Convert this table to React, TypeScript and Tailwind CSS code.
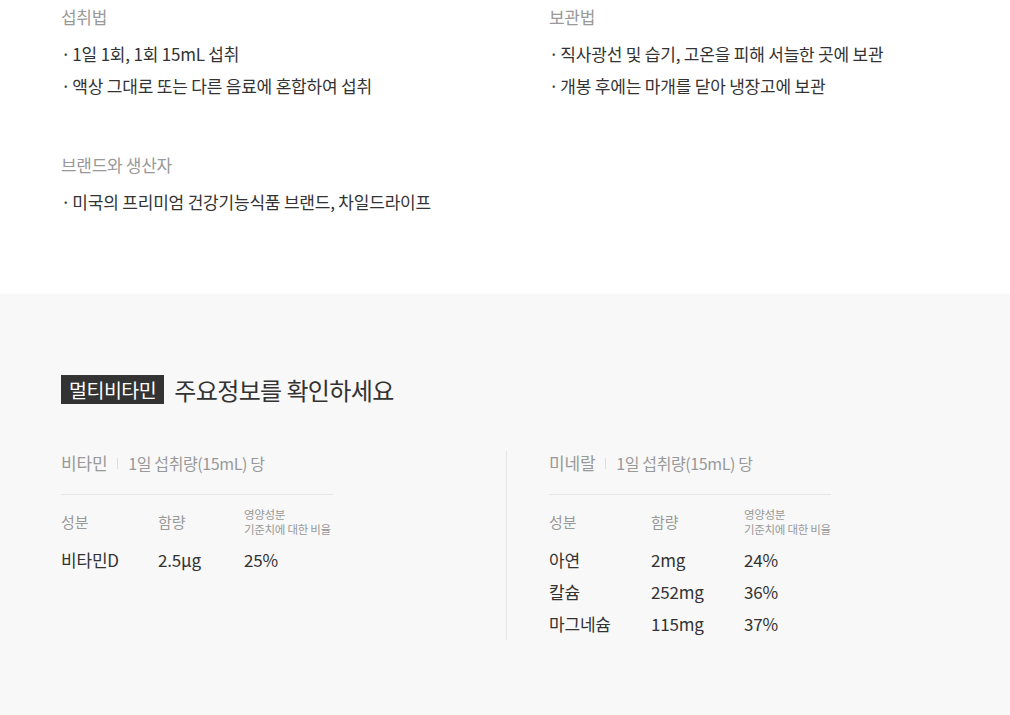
const FONT = "font-['Noto_Sans_CJK_KR','Noto_Sans',sans-serif]";

function Bullet({ children }: { children: string }) {
  return (
    <>
      <span className="mr-[2px]">·</span>
      {children}
    </>
  );
}

function InfoBlock({ title, items }: { title: string; items: string[] }) {
  return (
    <div>
      <h3 className="text-[17px] leading-[24px] text-[#999] tracking-[-0.3px]">{title}</h3>
      <ul className="mt-[9px]">
        {items.map((t) => (
          <li key={t} className="text-[17px] leading-[32px] text-[#333] tracking-[-0.2px]">
            <Bullet>{t}</Bullet>
          </li>
        ))}
      </ul>
    </div>
  );
}

type Row = [string, string, string];

function NutrientTable({ title, cols, rows, lineW }: { title: string; cols: number[]; rows: Row[]; lineW: number }) {
  return (
    <div>
      <div className="flex items-center pb-[19px] border-b border-[#e6e6e6]" style={{ width: lineW }}>
        <span className="text-[17px] leading-[24px] text-[#999] tracking-[-0.2px]">{title}</span>
        <span className="mx-[10px] h-[11px] w-px bg-[#ddd]" />
        <span className="text-[16px] leading-[24px] text-[#999] tracking-[-0.4px]">1일 섭취량(15mL) 당</span>
      </div>
      <div className="mt-[12px] flex items-center h-[30px] text-[#999]">
        <div className="text-[15px]" style={{ width: cols[0] }}>성분</div>
        <div className="text-[15px]" style={{ width: cols[1] }}>함량</div>
        <div className="text-[11.5px] leading-[15px] tracking-[-0.3px]">
          영양성분
          <br />
          기준치에 대한 비율
        </div>
      </div>
      <div className="mt-[7px]">
        {rows.map((r) => (
          <div key={r[0]} className="flex h-[32px] items-center text-[17px] text-[#333] tracking-[-0.2px]">
            <div style={{ width: cols[0] }}>{r[0]}</div>
            <div style={{ width: cols[1] }}>{r[1]}</div>
            <div>{r[2]}</div>
          </div>
        ))}
      </div>
    </div>
  );
}

export default function App() {
  return (
    <div className={`${FONT} min-h-screen bg-white`}>
      {/* 상단 정보 */}
      <div className="px-[61px] pt-[5px] pb-[76px]">
        <div className="grid grid-cols-[488px_1fr]">
          <InfoBlock title="섭취법" items={['1일 1회, 1회 15mL 섭취', '액상 그대로 또는 다른 음료에 혼합하여 섭취']} />
          <InfoBlock title="보관법" items={['직사광선 및 습기, 고온을 피해 서늘한 곳에 보관', '개봉 후에는 마개를 닫아 냉장고에 보관']} />
        </div>
        <div className="mt-[51px]">
          <h3 className="text-[17px] leading-[24px] text-[#999] tracking-[-0.3px]">브랜드와 생산자</h3>
          <p className="mt-[9px] text-[17px] leading-[32px] text-[#333] tracking-[-0.2px]">
            <Bullet>미국의 프리미엄 건강기능식품 브랜드, 차일드라이프</Bullet>
          </p>
        </div>
      </div>

      {/* 주요정보 */}
      <div className="bg-[#f8f8f8] px-[61px] pt-[81px] pb-[80px]">
        <div className="flex items-center h-[29px]">
          <span className="bg-[#333] text-white text-[19.5px] leading-[29px] px-[8px] tracking-[-0.5px]">멀티비타민</span>
          <span className="ml-[10px] text-[24px] text-[#333] tracking-[-0.6px]">주요정보를 확인하세요</span>
        </div>
        <div className="mt-[47px] grid grid-cols-[445px_1fr]">
          <NutrientTable title="비타민" cols={[97, 86]} lineW={272} rows={[['비타민D', '2.5μg', '25%']]} />
          <div className="border-l border-[#e6e6e6] pl-[42px]">
            <NutrientTable
              title="미네랄"
              cols={[102, 93]}
              lineW={282}
              rows={[
                ['아연', '2mg', '24%'],
                ['칼슘', '252mg', '36%'],
                ['마그네슘', '115mg', '37%'],
              ]}
            />
          </div>
        </div>
      </div>
    </div>
  );
}
